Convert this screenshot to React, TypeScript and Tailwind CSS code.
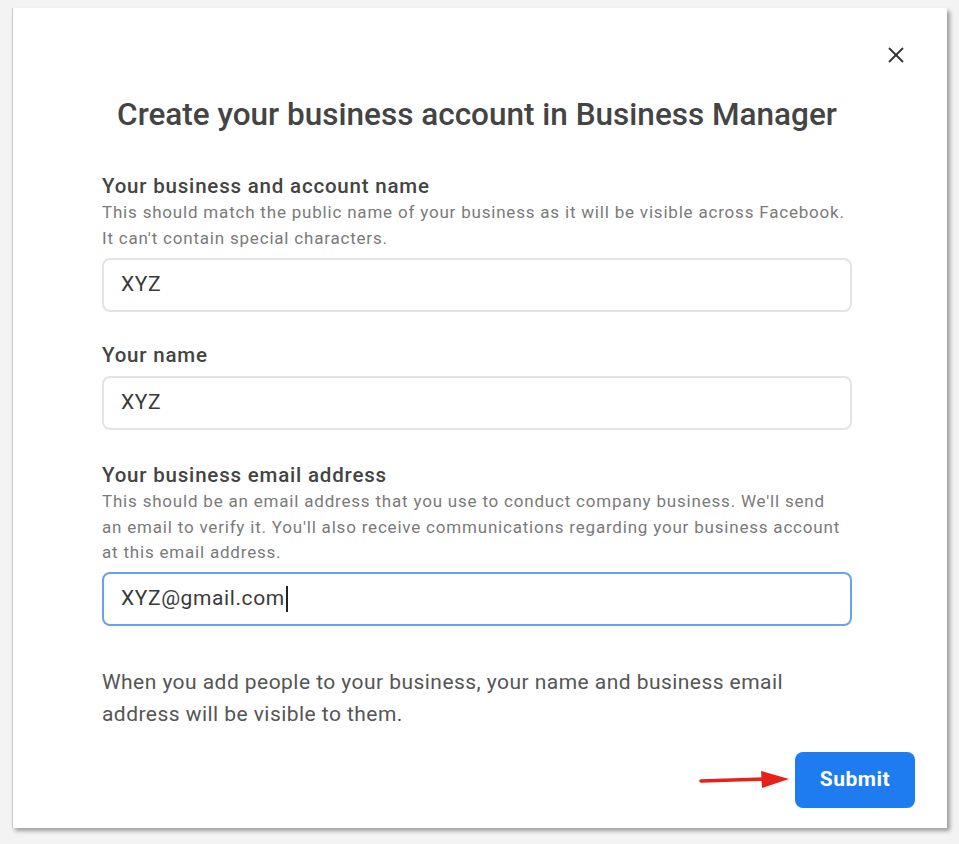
import { X } from "lucide-react";

type FieldProps = {
  label: string;
  hint?: React.ReactNode;
  value: string;
  focused?: boolean;
  className?: string;
};

function Field({ label, hint, value, focused, className }: FieldProps) {
  return (
    <div className={className}>
      <div className="text-[20.5px] leading-[28px] font-medium tracking-[0.8px] text-[#444]">
        {label}
      </div>
      {hint ? (
        <p className="text-[17px] leading-[25.5px] tracking-[0.8px] text-[#7a7a7a]">{hint}</p>
      ) : null}
      <div
        className={
          focused
            ? "mt-[6px] flex h-[54px] items-center rounded-[8px] border-2 border-[#6aa2e8] px-[17px]"
            : "mt-[7px] flex h-[54px] items-center rounded-[8px] border-2 border-[#e4e4e4] px-[17px]"
        }
      >
        <span className="text-[21px] tracking-[0.6px] text-[#3a3a3a]">{value}</span>
        {focused ? <span className="ml-[1px] h-[26px] w-[2px] bg-[#222]" /> : null}
      </div>
    </div>
  );
}

export default function App() {
  return (
    <div
      className="min-h-[844px] w-[959px] bg-[#f3f3f3] pl-[12px] pt-[8px]"
      style={{ fontFamily: "Roboto, 'Noto Sans', sans-serif" }}
    >
      <div className="relative flex h-[820px] w-[935px] flex-col border-l border-[#c9c9c9] bg-white shadow-[3px_3px_4px_rgba(0,0,0,0.35)]">
        <button className="absolute right-[38px] top-[34px] text-[#333]">
          <X className="h-[26px] w-[26px]" strokeWidth={1.7} />
        </button>

        <div className="pl-[89px] pr-[95px] pt-[89px]">
          <h1 className="text-center text-[31.5px] leading-[36px] font-medium text-[#444]">
            Create your business account in Business Manager
          </h1>

          <Field
            className="mt-[39px]"
            label="Your business and account name"
            hint={
              <>
                This should match the public name of your business as it will be visible across Facebook.
                <br />
                It can't contain special characters.
              </>
            }
            value="XYZ"
          />
          <Field className="mt-[29px]" label="Your name" value="XYZ" />
          <Field
            className="mt-[31px]"
            label="Your business email address"
            hint={
              <>
                This should be an email address that you use to conduct company business. We'll send
                <br />
                an email to verify it. You'll also receive communications regarding your business account
                <br />
                at this email address.
              </>
            }
            value="XYZ@gmail.com"
            focused
          />

          <p className="mt-[40px] text-[21px] leading-[32px] tracking-[0.45px] text-[#555]">
            When you add people to your business, your name and business email
            <br />
            address will be visible to them.
          </p>
        </div>

        <div className="mt-[22px] flex items-center justify-end gap-[6px] pr-[32px]">
          <svg width="90" height="20" viewBox="0 0 90 20">
            <line x1="2" y1="11" x2="66" y2="9" stroke="#e8201a" strokeWidth="3.5" strokeLinecap="round" />
            <polygon points="62,1 90,9 63,18" fill="#e8201a" />
          </svg>
          <button className="h-[56px] w-[120px] rounded-[8px] bg-[#1f7cf0] text-[21px] font-bold tracking-[0.5px] text-white">
            Submit
          </button>
        </div>
      </div>
    </div>
  );
}
